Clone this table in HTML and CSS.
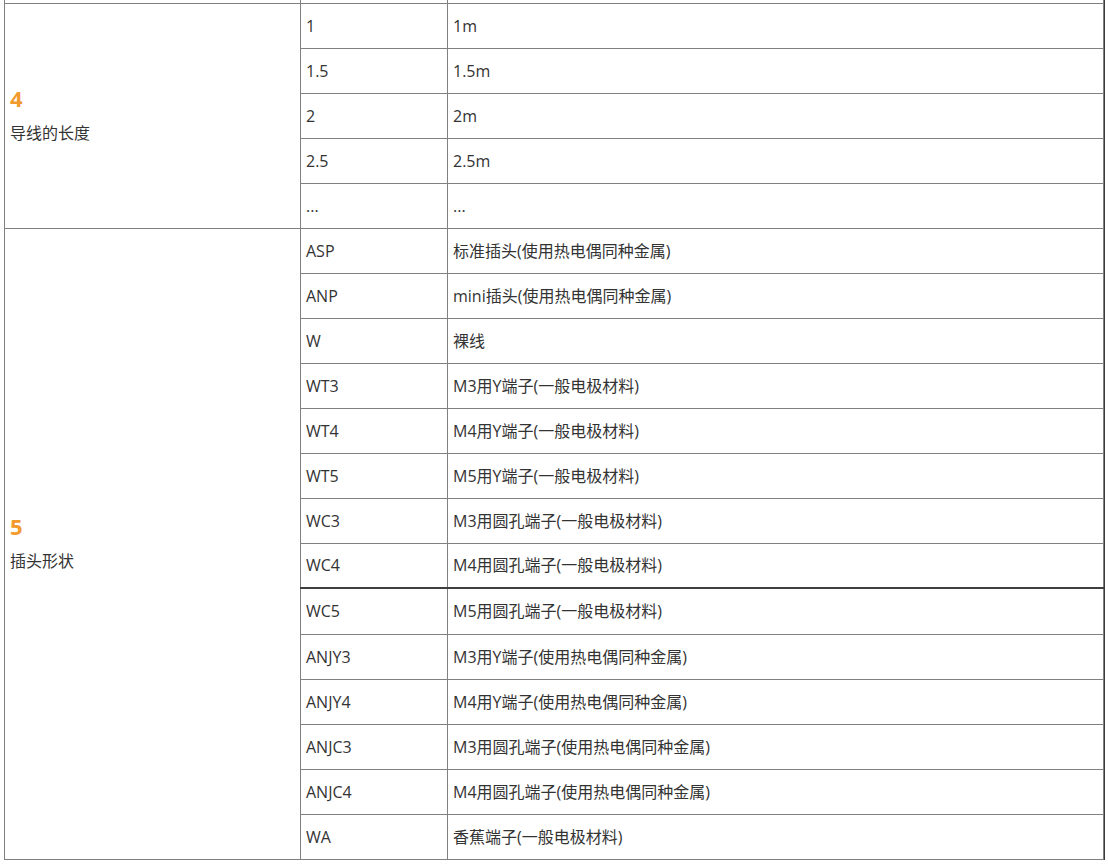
FILE: index.html
```html
<!DOCTYPE html>
<html lang="zh-CN">
<head>
<meta charset="utf-8">
<title>参数表</title>
<link rel="stylesheet" href="styles.css">
</head>
<body>
<div class="wrap">
<table class="spec">
  <colgroup><col class="c1"><col class="c2"><col class="c3"></colgroup>
  <tr class="cut"><td></td><td></td><td></td></tr>
  <tr><td class="group" rowspan="5"><div class="num">4</div><div class="label">导线的长度</div></td><td>1</td><td>1m</td></tr>
  <tr><td>1.5</td><td>1.5m</td></tr>
  <tr><td>2</td><td>2m</td></tr>
  <tr><td>2.5</td><td>2.5m</td></tr>
  <tr><td>...</td><td>...</td></tr>
  <tr><td class="group" rowspan="14"><div class="num">5</div><div class="label">插头形状</div></td><td>ASP</td><td>标准插头(使用热电偶同种金属)</td></tr>
  <tr><td>ANP</td><td>mini插头(使用热电偶同种金属)</td></tr>
  <tr><td>W</td><td>裸线</td></tr>
  <tr><td>WT3</td><td>M3用Y端子(一般电极材料)</td></tr>
  <tr><td>WT4</td><td>M4用Y端子(一般电极材料)</td></tr>
  <tr><td>WT5</td><td>M5用Y端子(一般电极材料)</td></tr>
  <tr><td>WC3</td><td>M3用圆孔端子(一般电极材料)</td></tr>
  <tr><td>WC4</td><td>M4用圆孔端子(一般电极材料)</td></tr>
  <tr class="dark"><td>WC5</td><td>M5用圆孔端子(一般电极材料)</td></tr>
  <tr><td>ANJY3</td><td>M3用Y端子(使用热电偶同种金属)</td></tr>
  <tr><td>ANJY4</td><td>M4用Y端子(使用热电偶同种金属)</td></tr>
  <tr><td>ANJC3</td><td>M3用圆孔端子(使用热电偶同种金属)</td></tr>
  <tr><td>ANJC4</td><td>M4用圆孔端子(使用热电偶同种金属)</td></tr>
  <tr><td>WA</td><td>香蕉端子(一般电极材料)</td></tr>
</table>
</div>
</body>
</html>
```
FILE: styles.css
```css
html, body {
  margin: 0;
  padding: 0;
  background: #fff;
}
.wrap {
  margin-left: 4px;
  width: 1099px;
  border-right: 2px solid #3a3a3a;
}
.spec {
  border-collapse: collapse;
  table-layout: fixed;
  width: 1099px;
  font-family: "Open Sans", "Noto Sans CJK SC", sans-serif;
  font-size: 16px;
  color: #333;
}
.c1 { width: 296px; }
.c2 { width: 147px; }
.c3 { width: 656px; }
.spec td {
  border: 1px solid #808080;
  height: 45px;
  padding: 0 0 0 5px;
  vertical-align: middle;
  line-height: 20px;
  box-sizing: border-box;
}
.spec tr.cut td {
  border-top: none;
  height: 3px;
  line-height: 0;
  font-size: 0;
  padding: 0;
}
.spec tr.dark td {
  border-top: 2px solid #3f3f3f;
  height: 46px;
}
.spec td.group {
  padding-left: 5px;
  border-top: 1px solid #808080;
}
.num {
  color: #f39a2f;
  font-weight: 700;
  font-size: 22px;
  line-height: 22px;
}
.label {
  margin-top: 12px;
  font-size: 16px;
  line-height: 24px;
}
```
